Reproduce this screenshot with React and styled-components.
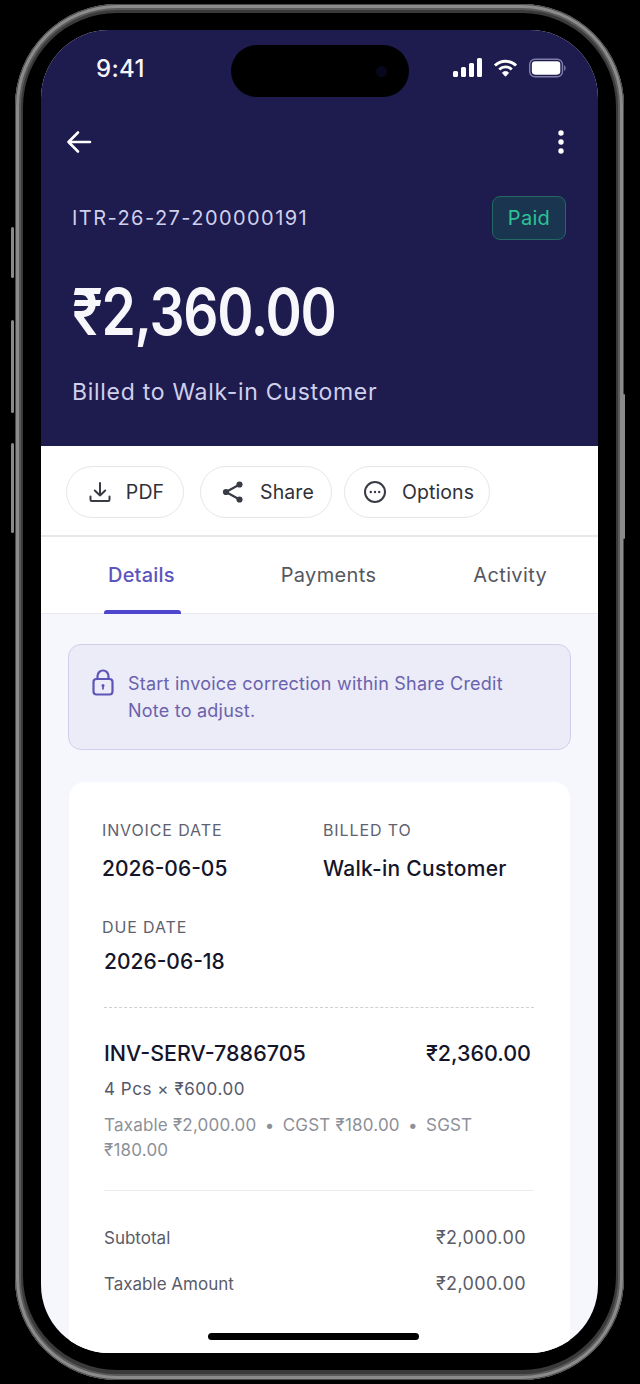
import React from "react";
import styled, { createGlobalStyle } from "styled-components";

const Global = createGlobalStyle`
  html, body { margin: 0; padding: 0; background: #000; }
  body { width: 640px; height: 1384px; overflow: hidden; font-family: Inter, "Noto Sans", sans-serif; -webkit-font-smoothing: antialiased; }
`;

const Stage = styled.div`
  width: 640px; height: 1384px; padding: 4px 16px 4px 15px; box-sizing: border-box; background: #000;
`;
const Ring = styled.div`
  position: relative; height: 1376px; box-sizing: border-box; padding: 9px 8px 10px 8px;
  border-radius: 102px;
  background: #3a3a3a;
  box-shadow: inset 0 0 0 1px #4a4a4a, inset 0 0 0 4px #8b8b8b, inset 0 0 0 6px #5a5a5a;
`;
const SideKey = styled.span`
  position: absolute; top: ${p => p.$top}px; height: ${p => p.$h}px; width: ${p => (p.$right ? 2 : 3)}px;
  ${p => (p.$right ? "right: -1px;" : "left: -4px;")}
  background: #8a8a8a; border-radius: 2px;
`;
const Bezel = styled.div`
  height: 100%; box-sizing: border-box; padding: 17px 18px 17px 18px; background: #000; border-radius: 94px;
`;
const Screen = styled.div`
  position: relative; height: 100%; overflow: hidden; border-radius: 68px; background: #f6f7fc;
  display: flex; flex-direction: column;
`;
const Header = styled.header`
  flex: none; height: 416px; box-sizing: border-box; background: #1e1b4f; color: #fff;
  padding: 0 32px 0 31px; display: flex; flex-direction: column;
`;
const StatusBar = styled.div`
  height: 76px; flex: none; display: flex; justify-content: space-between; align-items: center; padding: 0 0 0 24px;
`;
const Clock = styled.span`font-size: 24px; font-weight: 500; letter-spacing: .3px; color: #f5f5f8;`;
const StatusIcons = styled.div`display: flex; align-items: center; gap: 11px;`;
const Island = styled.div`
  position: absolute; left: 190px; top: 15px; width: 178px; height: 52px; background: #000; border-radius: 26px;
`;
const Lens = styled.span`
  position: absolute; right: 22px; top: 21px; width: 11px; height: 11px; border-radius: 50%; background: #07071d;
`;
const NavRow = styled.div`
  display: flex; justify-content: space-between; align-items: center; height: 32px; margin-top: 20px; margin-left: -6px; padding-right: 1px;
`;
const IdRow = styled.div`
  display: flex; justify-content: space-between; align-items: center; margin-top: 38px; height: 44px;
`;
const InvoiceId = styled.span`font-size: 20px; letter-spacing: 1.44px; color: #cfd0ec;`;
const PaidBadge = styled.span`
  width: 74px; height: 44px; box-sizing: border-box; display: flex; align-items: center; justify-content: center;
  border: 1px solid #23695f; background: #1a3550; border-radius: 8px; font-size: 20px; font-weight: 400; letter-spacing: .3px; color: #2cc295;
`;
const Amount = styled.div`
  font-size: 64px; line-height: 72px; font-weight: 600; letter-spacing: -1.5px; margin-top: 36px; color: #f7f7fb;
  transform: scaleX(.86); transform-origin: left center; white-space: nowrap;
`;
const BilledLine = styled.div`font-size: 23px; line-height: 30px; letter-spacing: .71px; margin-top: 29px; color: #cfd0ec;`;

const Actions = styled.div`
  flex: none; height: 91px; box-sizing: border-box; background: #fff; border-bottom: 2px solid #e8e8ec;
  padding: 20px 0 0 25px; display: flex; align-items: flex-start;
`;
const Pill = styled.button`
  height: 52px; width: ${p => p.$w}px; margin-right: ${p => p.$mr || 0}px; box-sizing: border-box; flex: none; background: #fff; border: 1.5px solid #e7e7ea; border-radius: 26px;
  display: flex; align-items: center; justify-content: center; gap: 15px; padding: 0 0 0 3px;
  font: 400 19.5px Inter, sans-serif; letter-spacing: .1px; color: #2f3139;
`;
const Tabs = styled.nav`
  flex: none; height: 77px; box-sizing: border-box; background: #fff; border-bottom: 1px solid #e9eaf0; display: flex; align-items: flex-start;
  padding-left: 67px; padding-top: 24px;
`;
const Tab = styled.span`
  font-size: 20px; line-height: 28px; font-weight: ${p => (p.$active ? 500 : 400)}; letter-spacing: ${p => (p.$active ? .2 : .35)}px; color: ${p => (p.$active ? "#5b54bd" : "#55575f")};
  margin-right: ${p => p.$mr || 0}px; position: relative;
  ${p => p.$active && `
    &::after { content: ""; position: absolute; left: -4px; right: -6px; bottom: -25px; height: 4px; background: #4f46ce; border-radius: 3px 3px 0 0; }
  `}
`;
const Body = styled.div`flex: 1; min-height: 0; padding: 30px 27px 0 27px; overflow: hidden; display: flex; flex-direction: column;`;
const Banner = styled.div`
  flex: none; height: 106px; box-sizing: border-box; border: 1.5px solid #d0d0ea; border-radius: 13px; background: #ecebf8;
  display: flex; gap: 14px; padding: 24px 22px 0 23px; color: #6a62ad; font-size: 18px; line-height: 27px; letter-spacing: .23px;
`;
const BannerText = styled.p`margin: 1px 0 0;`;
const Card = styled.section`
  flex: 1; margin: 32px 1px 0 1px; background: #fff; border-radius: 16px 16px 0 0; padding: 38px 36px 0 33px;
`;
const MetaGrid = styled.div`display: grid; grid-template-columns: 221px 1fr;`;
const MetaLabel = styled.div`font-size: 16px; line-height: 20px; letter-spacing: .88px; color: #5e616e;`;
const MetaValue = styled.div`font-size: 21px; line-height: 28px; font-weight: 500; color: #14152a; margin-top: ${p => p.$mt ?? 15}px; margin-left: ${p => p.$in || 0}px; letter-spacing: ${p => p.$ls || 0}px;`;
const DueBlock = styled.div`margin-top: 34px;`;
const Dashed = styled.div`border-top: 1.5px dashed #d0d0d4; margin: 31px 0 0 2px;`;
const ItemHead = styled.div`display: flex; justify-content: space-between; margin: 31px 3px 0 2px; font-size: 21.5px; line-height: 28px; font-weight: 500; color: #14152a;`;
const Qty = styled.div`font-size: 17px; line-height: 24px; margin: 10px 0 0 2px; letter-spacing: .55px; color: #55586a;`;
const TaxLine = styled.div`font-size: 17px; line-height: 25px; margin: 12px 56px 0 2px; letter-spacing: .2px; color: #8d9098;`;
const Rule = styled.div`border-top: 1.5px solid #ececef; margin: 27px 0 0 2px;`;
const Totals = styled.div`margin: 36px 8px 0 2px; display: flex; flex-direction: column; gap: 24px;`;
const TotalRow = styled.div`
  display: flex; justify-content: space-between; font-size: 17px; line-height: 22px; color: #5a5c68;
`;
const TotalAmount = styled.span`font-size: 18px; letter-spacing: .4px;`;
const HomeBar = styled.div`
  position: absolute; left: 167px; bottom: 13px; width: 211px; height: 7px; border-radius: 4px; background: #000;
`;

const Arrow = () => (
  <svg width="26" height="24" viewBox="0 0 26 24" fill="none" stroke="#fff" strokeWidth="2.6" strokeLinecap="round" strokeLinejoin="round">
    <path d="M24 12H2.5M12 2.5L2.5 12L12 21.5" />
  </svg>
);
const Dots = () => (
  <svg width="8" height="24" viewBox="0 0 8 24" fill="#fff"><circle cx="4" cy="3" r="2.7" /><circle cx="4" cy="12" r="2.7" /><circle cx="4" cy="21" r="2.7" /></svg>
);
const Signal = () => (
  <svg width="29" height="20" viewBox="0 0 29 20" fill="#fff">
    <rect x="0" y="13" width="5" height="6" rx="1.5" /><rect x="8" y="9" width="5" height="10" rx="1.5" />
    <rect x="16" y="5" width="5" height="14" rx="1.5" /><rect x="24" y="0" width="5" height="19" rx="1.5" />
  </svg>
);
const Wifi = () => (
  <svg width="25" height="20" viewBox="0 0 26 20" fill="none" stroke="#fff" strokeWidth="3">
    <path d="M2 7.5C8 1.5 18 1.5 24 7.5" /><path d="M6.5 11.5C10 8 16 8 19.5 11.5" />
    <path d="M9.8 15L13 18.6L16.2 15C14.5 13.3 11.5 13.3 9.8 15Z" fill="#fff" strokeWidth="1" />
  </svg>
);
const Battery = () => (
  <svg width="37" height="20" viewBox="0 0 39 20">
    <rect x=".75" y=".75" width="34.5" height="18.5" rx="5.5" fill="none" stroke="#7f7ea8" strokeWidth="1.5" />
    <rect x="3" y="3" width="30" height="14" rx="3.5" fill="#fff" />
    <path d="M37 7v6c1.2-.4 1.600-1.600 1.600-3S38.200 7.400 37 7Z" fill="#7f7ea8" />
  </svg>
);
const Download = () => (
  <svg width="22" height="22" viewBox="0 0 22 22" fill="none" stroke="#3a3c45" strokeWidth="2" strokeLinecap="round" strokeLinejoin="round">
    <path d="M11 2v12.500M5.800 9.500L11 14.500l5.200-5" /><path d="M1.500 15.500v3.200a1.300 1.300 0 0 0 1.300 1.300h16.400a1.300 1.300 0 0 0 1.300-1.300v-3.200" />
  </svg>
);
const ShareIcon = () => (
  <svg width="24" height="24" viewBox="0 0 24 24" fill="#3a3c45" stroke="#3a3c45" strokeWidth="2.2">
    <path d="M18.500 4.500L5 12l13.500 7.500" fill="none" /><circle cx="18.500" cy="4.500" r="2" /><circle cx="5" cy="12" r="2" /><circle cx="18.500" cy="19.500" r="2" />
  </svg>
);
const MoreCircle = () => (
  <svg width="24" height="24" viewBox="0 0 24 24" fill="none" stroke="#3a3c45" strokeWidth="2">
    <circle cx="12" cy="12" r="10" />
    <g fill="#3a3c45" stroke="none"><circle cx="7.800" cy="12" r="1.200" /><circle cx="12" cy="12" r="1.200" /><circle cx="16.200" cy="12" r="1.200" /></g>
  </svg>
);
const Lock = () => (
  <svg width="22" height="27" viewBox="0 0 22 27" fill="none" stroke="#5e55b8" strokeWidth="2.200" style={{ flex: "none" }} strokeLinejoin="round">
    <rect x="1.500" y="10" width="19" height="15.500" rx="3" />
    <path d="M5.500 10V7a5.500 5.500 0 0 1 11 0v3" />
    <circle cx="11" cy="16.500" r="1.500" fill="#5e55b8" stroke="none" /><path d="M11 17v3.500" strokeWidth="1.800" />
  </svg>
);

export default function App() {
  return (
    <Stage>
      <Global />
      <Ring>
        <SideKey $top={223} $h={51} /><SideKey $top={316} $h={93} /><SideKey $top={439} $h={90} />
        <SideKey $right $top={390} $h={145} />
        <Bezel>
          <Screen>
            <Island><Lens /></Island>
            <Header>
              <StatusBar>
                <Clock>9:41</Clock>
                <StatusIcons><Signal /><Wifi /><Battery /></StatusIcons>
              </StatusBar>
              <NavRow><Arrow /><Dots /></NavRow>
              <IdRow><InvoiceId>ITR-26-27-200000191</InvoiceId><PaidBadge>Paid</PaidBadge></IdRow>
              <Amount>₹2,360.00</Amount>
              <BilledLine>Billed to Walk-in Customer</BilledLine>
            </Header>
            <Actions>
              <Pill $w={118} $mr={16}><Download />PDF</Pill>
              <Pill $w={132} $mr={12}><ShareIcon />Share</Pill>
              <Pill $w={146}><MoreCircle />Options</Pill>
            </Actions>
            <Tabs>
              <Tab $active $mr={106}>Details</Tab>
              <Tab $mr={97}>Payments</Tab>
              <Tab>Activity</Tab>
            </Tabs>
            <Body>
              <Banner>
                <Lock />
                <BannerText>Start invoice correction within Share Credit Note to adjust.</BannerText>
              </Banner>
              <Card>
                <MetaGrid>
                  <div><MetaLabel>INVOICE DATE</MetaLabel><MetaValue>2026-06-05</MetaValue></div>
                  <div><MetaLabel>BILLED TO</MetaLabel><MetaValue $ls={0.28}>Walk-in Customer</MetaValue></div>
                </MetaGrid>
                <DueBlock><MetaLabel>DUE DATE</MetaLabel><MetaValue $mt={11} $in={2}>2026-06-18</MetaValue></DueBlock>
                <Dashed />
                <ItemHead><span>INV-SERV-7886705</span><span>₹2,360.00</span></ItemHead>
                <Qty>4 Pcs × ₹600.00</Qty>
                <TaxLine>{"Taxable ₹2,000.00 \u2009•\u2009 CGST ₹180.00 \u2009•\u2009 SGST ₹180.00"}</TaxLine>
                <Rule />
                <Totals>
                  <TotalRow><span>Subtotal</span><TotalAmount>₹2,000.00</TotalAmount></TotalRow>
                  <TotalRow><span>Taxable Amount</span><TotalAmount>₹2,000.00</TotalAmount></TotalRow>
                </Totals>
              </Card>
            </Body>
            <HomeBar />
          </Screen>
        </Bezel>
      </Ring>
    </Stage>
  );
}
